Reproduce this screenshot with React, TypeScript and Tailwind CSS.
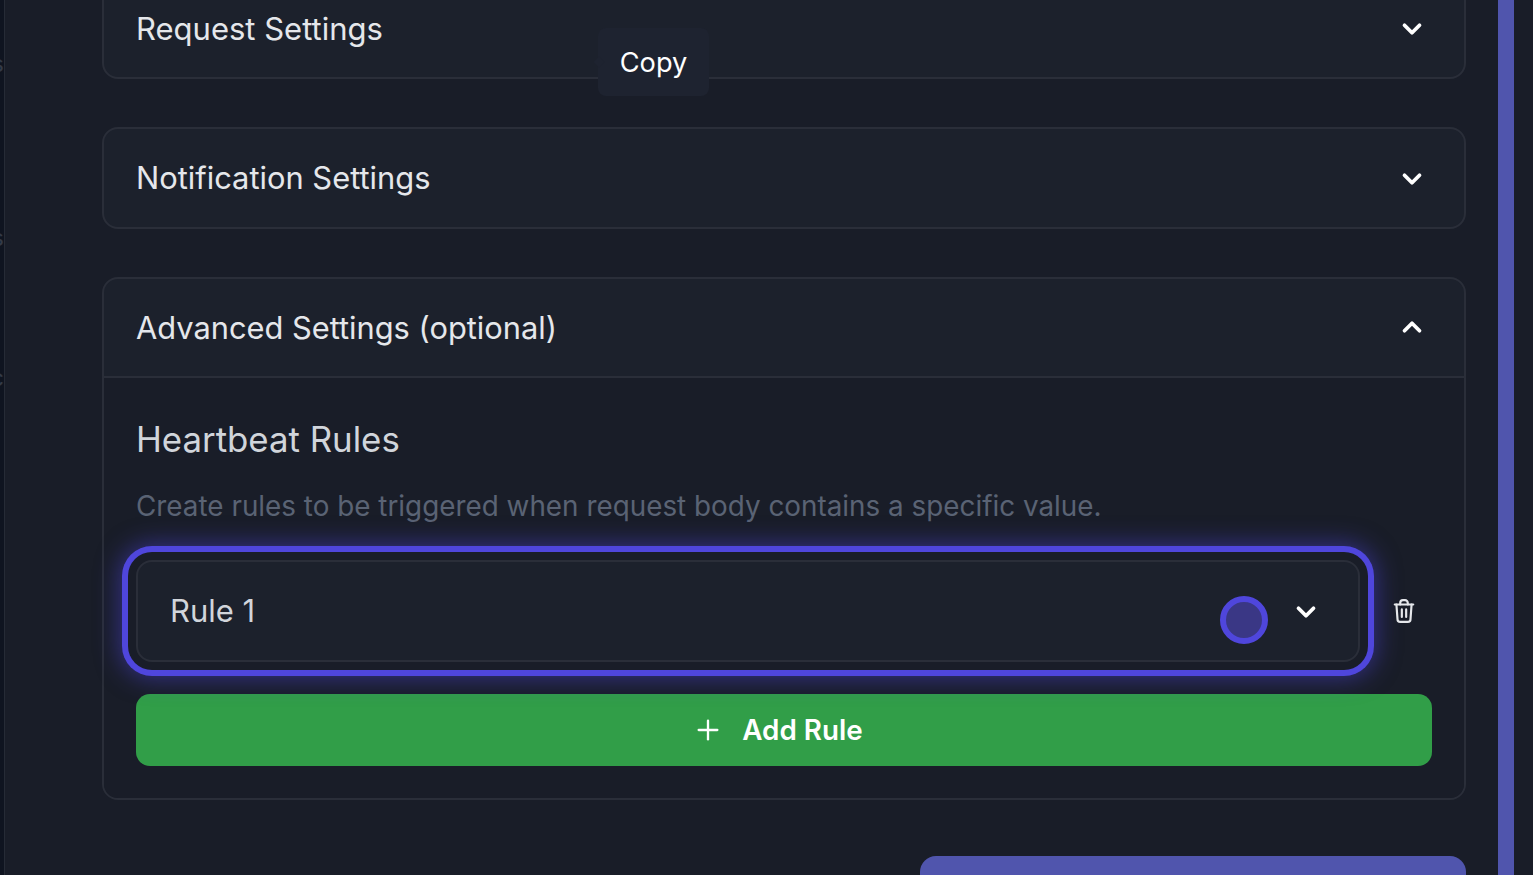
import { ChevronDown, ChevronUp, Plus } from "lucide-react"

const font = { fontFamily: "Inter, sans-serif" }

function AccordionHeader({ title, open, first }: { title: string; open?: boolean; first?: boolean }) {
  const Icon = open ? ChevronUp : ChevronDown
  return (
    <div className={open ? "flex h-[97px] items-center justify-between pl-[32px] pr-[37px]" : "flex h-[98px] items-center justify-between pl-[32px] pr-[37px]"}>
      <span className={first ? "text-[31px] leading-none text-[#e5e7eb]" : open ? "pt-[2px] text-[30.8px] leading-none text-[#e5e7eb]" : "text-[30.85px] leading-none text-[#e5e7eb]"}>{title}</span>
      <Icon size={30} strokeWidth={3} className={open ? "-mt-[2px] text-white" : "mt-[2px] text-white"} />
    </div>
  )
}

function TrashIcon() {
  return (
    <svg width="26" height="26" viewBox="0 0 24 24" fill="none" stroke="currentColor" strokeWidth="2" strokeLinecap="round" strokeLinejoin="round">
      <path d="M3.5 6h17" />
      <path d="M8.5 6V4.5a2.5 2.5 0 0 1 2.5-2.5h2a2.5 2.5 0 0 1 2.5 2.5V6" />
      <path d="M5 6l1 13.5a2.5 2.5 0 0 0 2.5 2.5h7a2.5 2.5 0 0 0 2.5-2.5L19 6" />
      <path d="M10 10.5v7M14 10.5v7" />
    </svg>
  )
}

export default function App() {
  return (
    <div style={font} className="flex h-[875px] w-[1533px] overflow-hidden bg-[#191d28]">
      {/* sliver of the sidebar */}
      <div className="flex h-full w-[5px] shrink-0 flex-col items-end overflow-hidden border-r border-[#262b36] bg-[#0f1420] text-[24px] leading-none text-[#333a47]">
        <span className="mt-[52px]">s</span>
        <span className="mt-[150px]">s</span>
        <span className="mt-[116px]">c</span>
      </div>

      <div className="relative flex-1 pl-[97px] pr-[67px]">
        <div className="-mt-[23px] flex flex-col gap-[48px]">
          <div className="rounded-[16px] border-2 border-[#2a2e39] bg-[#1c212c]">
            <AccordionHeader title="Request Settings" first />
          </div>
          <div className="rounded-[16px] border-2 border-[#2a2e39] bg-[#1c212c]">
            <AccordionHeader title="Notification Settings" />
          </div>
          <div className="rounded-[16px] border-2 border-[#2a2e39] bg-[#1c212c]">
            <AccordionHeader title="Advanced Settings (optional)" open />
            <div className="rounded-b-[14px] border-t-2 border-[#2a2e39] bg-[#191d28] px-[32px] pb-[32px] pt-[39px]">
              <h3 className="text-[34.8px] leading-[44px] text-[#d1d5db]">Heartbeat Rules</h3>
              <p className="mt-[23px] text-[27.85px] leading-[44px] text-[#5a6374]">
                Create rules to be triggered when request body contains a specific value.
              </p>
              <div className="mt-[32px] flex items-center">
                <div className="relative z-10 flex h-[102px] w-[1224px] items-center justify-between rounded-[16px] border-2 border-[#2a2e39] bg-[#1c212c] pl-[32px] pr-[37px] shadow-[0_0_0_8px_#191d28,0_0_0_14px_#4f46dc,0_0_24px_16px_rgba(79,70,229,0.5)]">
                  <span className="pb-[2px] text-[31px] leading-none text-[#d1d5db]">Rule 1</span>
                  <div className="flex items-center gap-[23px]">
                    <div className="mt-[18px] h-[48px] w-[48px] rounded-full border-[6px] border-[#4f46dc] bg-[#3a3785]" />
                    <ChevronDown size={30} strokeWidth={3} className="mt-[2px] text-white" />
                  </div>
                </div>
                <button className="relative z-20 ml-[31px] text-[#e5e7eb]">
                  <TrashIcon />
                </button>
              </div>
              <button className="mt-[32px] flex h-[72px] w-full items-center justify-center gap-[18px] rounded-[14px] bg-[#319e48] pr-[13px] text-[27.8px] font-semibold text-white">
                <Plus size={32} strokeWidth={1.75} />
                <span className="pt-[2px]">Add Rule</span>
              </button>
            </div>
          </div>
          <div className="flex justify-end">
            <div className="mt-[8px] h-[72px] w-[546px] rounded-[16px] bg-[#5055ad]" />
          </div>
        </div>

        {/* tooltip */}
        <div className="absolute left-[593px] top-[28px] z-20 flex h-[68px] w-[111px] items-center justify-center rounded-[8px] bg-[#1e2330] pt-[2px] text-[27.2px] text-white">
          <span className="absolute -left-[3px] top-[30px] h-[8px] w-[8px] rotate-45 bg-[#1e2330]" />
          Copy
        </div>
      </div>

      {/* scrollbar */}
      <div className="absolute left-[1498px] top-0 h-[875px] w-[16px] bg-[#5055ad]" />
    </div>
  )
}
